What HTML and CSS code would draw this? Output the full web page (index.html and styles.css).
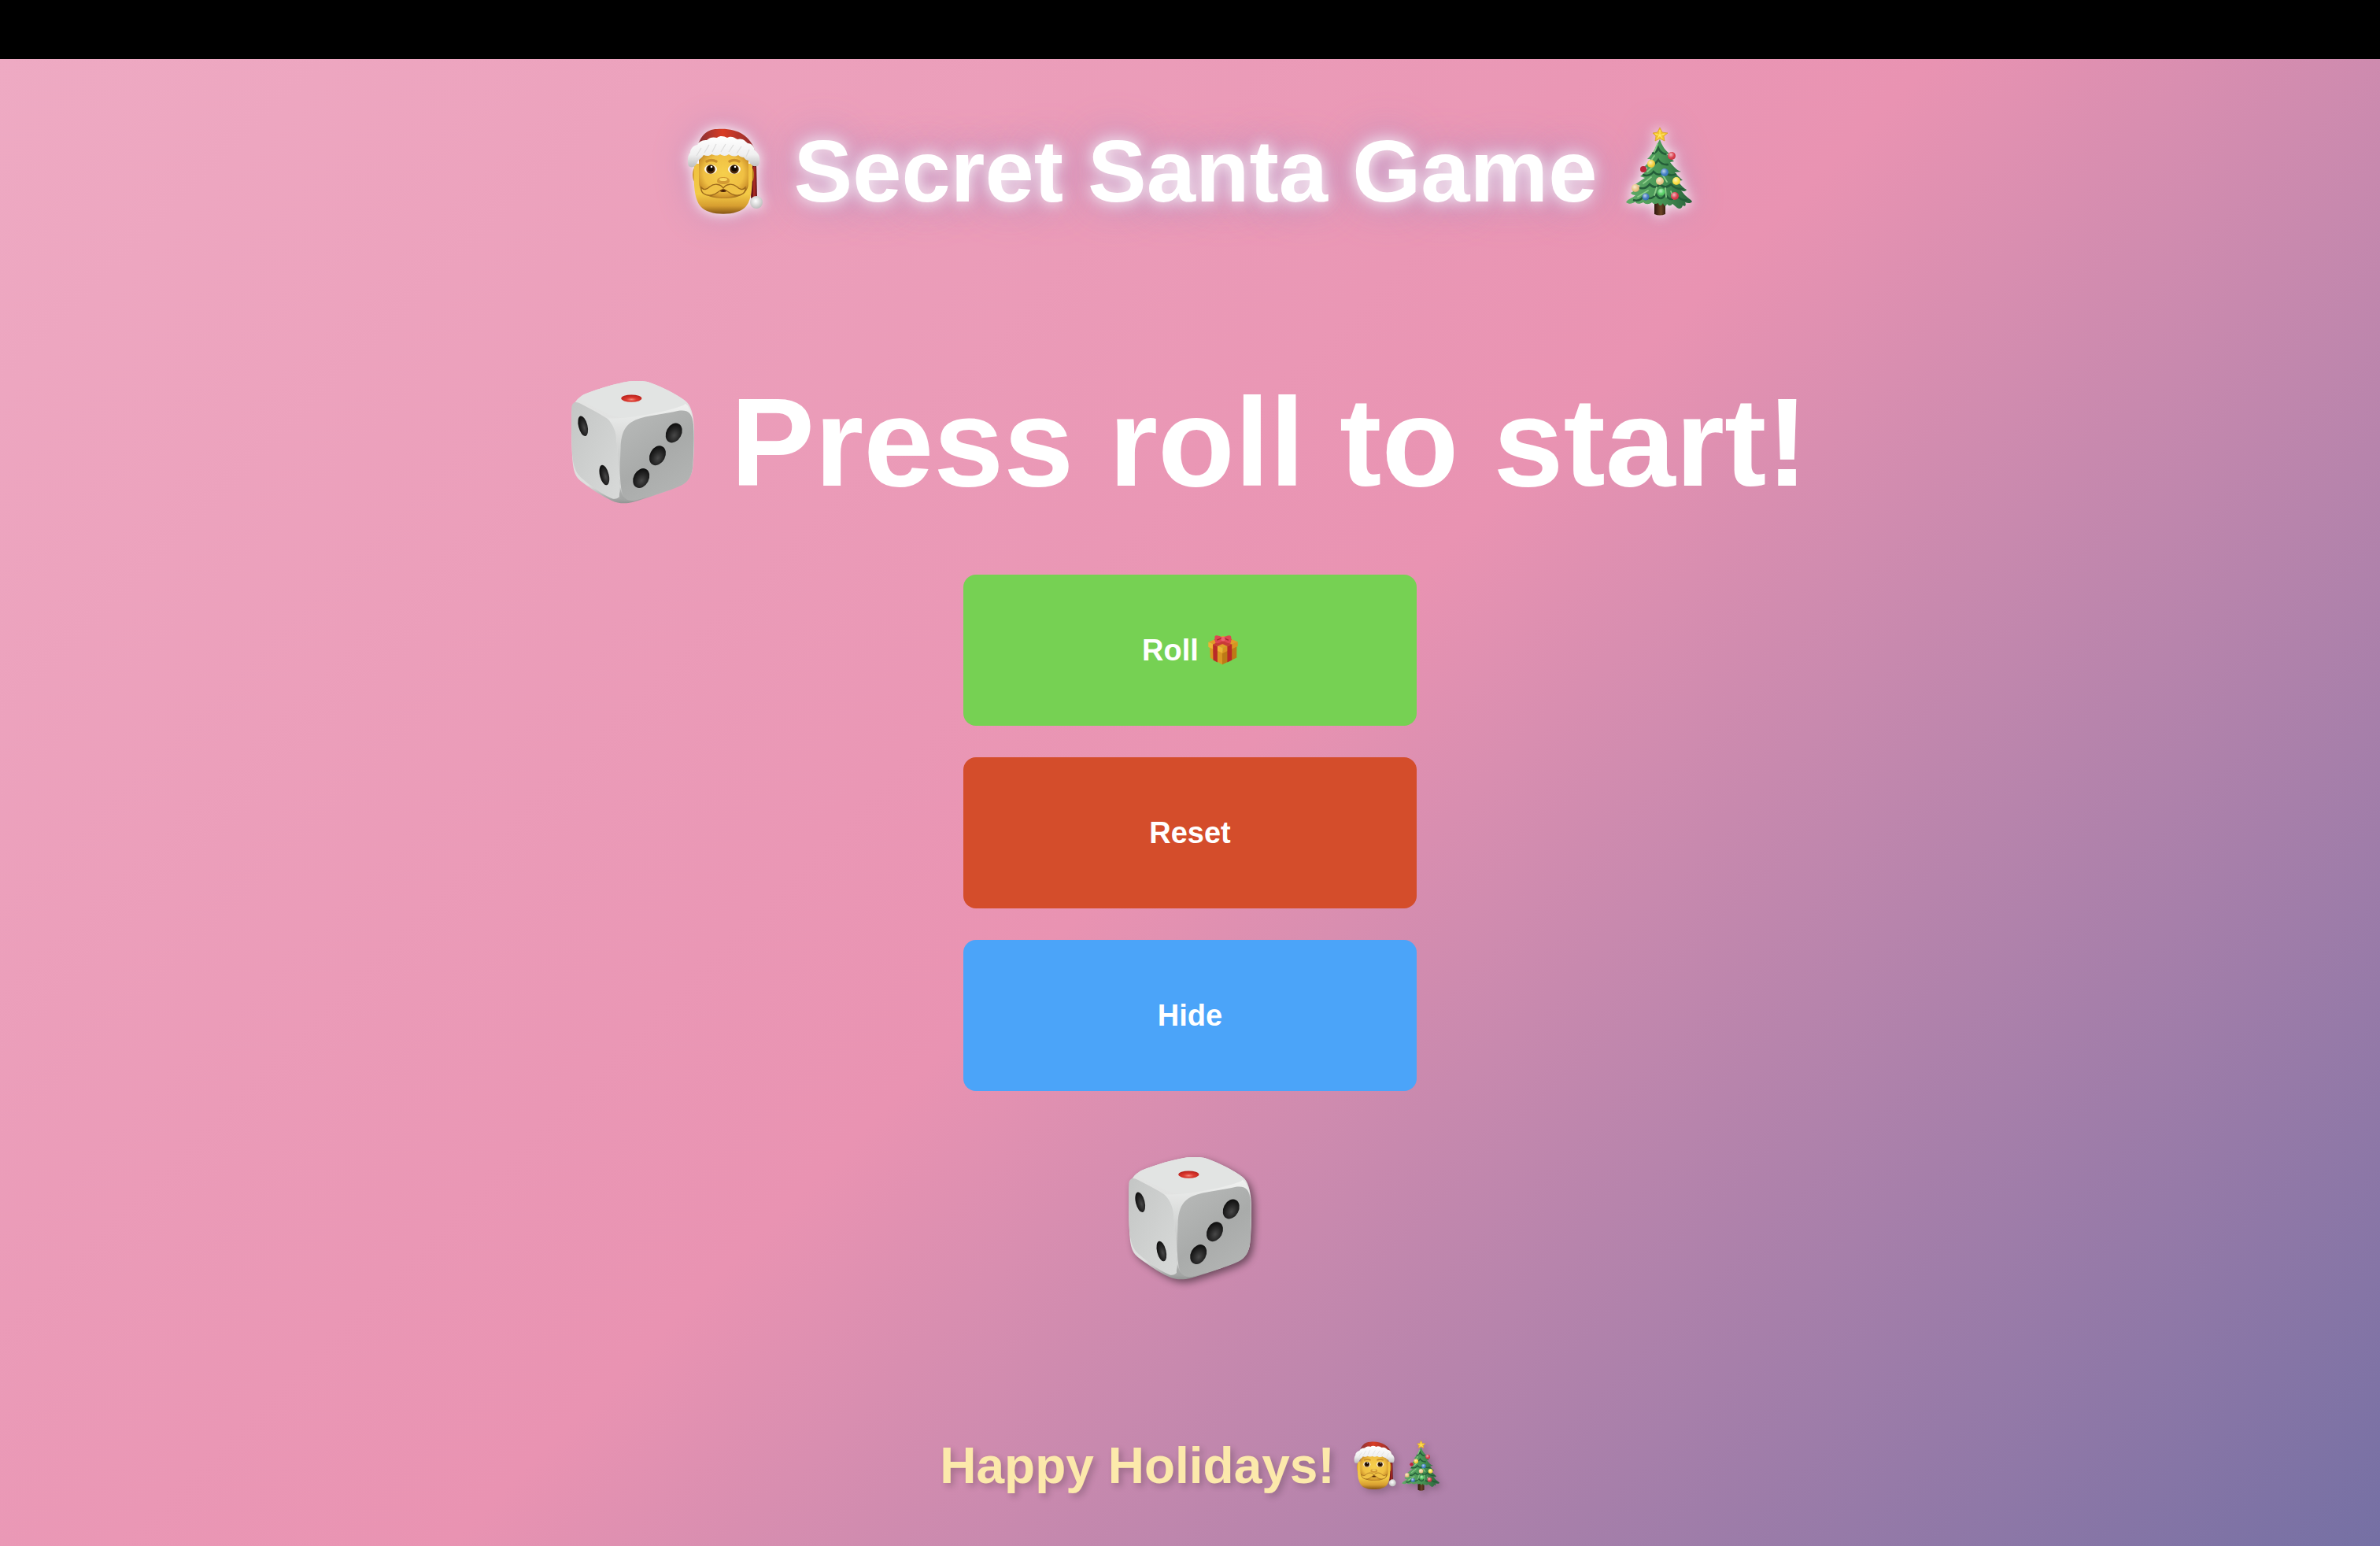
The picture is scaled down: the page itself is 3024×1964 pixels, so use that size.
FILE: index.html
```html
<!DOCTYPE html>
<html lang="en">
<head>
<meta charset="utf-8">
<meta name="viewport" content="width=device-width, initial-scale=1">
<title>Secret Santa Game</title>
<link rel="stylesheet" href="styles.css">
</head>
<body>
<svg class="sprites" aria-hidden="true">
  <defs>
    <linearGradient id="hatRed" x1="0" x2="1"><stop offset="0" stop-color="#7d3038"/><stop offset=".45" stop-color="#d93c24"/><stop offset="1" stop-color="#8c2b2e"/></linearGradient>
    <radialGradient id="skin" cx=".5" cy=".42" r=".62"><stop offset="0" stop-color="#f6cf4c"/><stop offset=".65" stop-color="#f0c043"/><stop offset=".88" stop-color="#d0962c"/><stop offset="1" stop-color="#94601a"/></radialGradient>
    <linearGradient id="beard" x1="0" y1="0" x2="0" y2="1"><stop offset="0" stop-color="#efc040"/><stop offset=".6" stop-color="#f3ca46"/><stop offset=".84" stop-color="#d79e30"/><stop offset="1" stop-color="#855414"/></linearGradient>
    <linearGradient id="fur" x1="0" y1="0" x2="0" y2="1"><stop offset="0" stop-color="#fff"/><stop offset=".6" stop-color="#f0f0f0"/><stop offset="1" stop-color="#bdbdbd"/></linearGradient>
    <radialGradient id="pom" cx=".45" cy=".4" r=".6"><stop offset="0" stop-color="#fff"/><stop offset="1" stop-color="#bcbcbc"/></radialGradient>
    <linearGradient id="leaf" x1="0" y1="0" x2="1" y2="0"><stop offset="0" stop-color="#62ab68"/><stop offset=".5" stop-color="#4a9857"/><stop offset="1" stop-color="#285f3a"/></linearGradient>
    <linearGradient id="trunk" x1="0" x2="1"><stop offset="0" stop-color="#2c160b"/><stop offset=".6" stop-color="#6d4426"/><stop offset="1" stop-color="#3a2010"/></linearGradient>
    <linearGradient id="dieBody" x1="0" y1="0" x2="0" y2="1"><stop offset="0" stop-color="#e3e4e3"/><stop offset=".85" stop-color="#dedfde"/><stop offset="1" stop-color="#929493"/></linearGradient>
    <linearGradient id="dieLeft" x1="0" y1="0" x2="1" y2="1"><stop offset="0" stop-color="#c4c6c5"/><stop offset="1" stop-color="#d8dad9"/></linearGradient>
    <linearGradient id="dieRight" x1="0" y1="0" x2=".6" y2="1"><stop offset="0" stop-color="#b9bbba"/><stop offset=".6" stop-color="#a9abaa"/><stop offset="1" stop-color="#b2b4b3"/></linearGradient>
    <linearGradient id="dieEdge" x1="0" y1="0" x2="0" y2="1"><stop offset="0" stop-color="#f0f1f0"/><stop offset=".6" stop-color="#c9cbca"/><stop offset="1" stop-color="#a0a2a1"/></linearGradient>
    <radialGradient id="pip" cx=".6" cy=".6" r=".65"><stop offset="0" stop-color="#484848"/><stop offset=".5" stop-color="#272727"/><stop offset="1" stop-color="#0b0b0b"/></radialGradient>
    <radialGradient id="pipRed" cx=".5" cy=".65" r=".6"><stop offset="0" stop-color="#f18a7c"/><stop offset=".4" stop-color="#dd3a30"/><stop offset="1" stop-color="#b9221c"/></radialGradient>
    <radialGradient id="sheen" cx=".4" cy=".35" r=".65"><stop offset="0" stop-color="#fff" stop-opacity=".65"/><stop offset=".7" stop-color="#fff" stop-opacity="0"/><stop offset="1" stop-color="#000" stop-opacity=".15"/></radialGradient>
  </defs>

  <symbol id="santa" viewBox="0 0 100 112">
    <path d="M82 46h6l1 44h-8z" fill="#6f1518"/><path d="M84 50h3l0 38h-3z" fill="#a52822"/>
    <ellipse cx="11" cy="60" rx="4" ry="10" fill="#cf972e"/><ellipse cx="82" cy="60" rx="3" ry="9" fill="#b9801f"/>
    <path d="M9 46C8 74 9 90 17 100c10 13 48 13 58 0 8-10 8-28 8-54z" fill="url(#beard)"/>
    <path d="M15 34h63v36c0 15-14 20-31 20S15 86 15 68z" fill="url(#skin)"/>
    <path d="M11 32C15 12 24 2 38 2c22-2 43 6 49 30z" fill="url(#hatRed)"/>
    <path d="M25 43q6-3 12 0M54 43q6-3 12 0" fill="none" stroke="#c98f2b" stroke-width="3.5" stroke-linecap="round"/>
    <ellipse cx="30" cy="53" rx="8" ry="6" fill="#fffbed"/><ellipse cx="60" cy="53" rx="8" ry="6" fill="#fffbed"/>
    <circle cx="30" cy="53" r="5.7" fill="#4c2808"/><circle cx="60" cy="53" r="5.7" fill="#4c2808"/>
    <circle cx="30" cy="52" r="3.8" fill="#110700"/><circle cx="60" cy="52" r="3.8" fill="#110700"/>
    <circle cx="31" cy="50" r="1.3" fill="#fff"/><circle cx="61" cy="50" r="1.3" fill="#fff"/>
    <path d="M38 68c0-4 4-5 8-5s8 1 8 5c0 3-4 4-8 4s-8-1-8-4z" fill="#d39a33"/><ellipse cx="46" cy="66" rx="5" ry="2" fill="#f9d75e"/>
    <ellipse cx="46" cy="79" rx="6" ry="3" fill="#4a2107"/>
    <path d="M46 77c-4-6-12-6-17-2-4 4-8 5-11 1-1 7 5 11 13 10 7-1 9-6 15-8 6 2 8 7 15 8 8 1 14-3 13-10-3 4-7 3-11-1-5-4-13-4-17 2z" fill="#f0c245" stroke="#9c681b" stroke-width="1.3"/>
    <path d="M2 49C0 42 1 35 4 32c0-5 4-9 9-10 2-5 8-6 12-6 4-4 9-4 13-3 4-3 9-2 13 0 5-3 9 0 13 2 6-2 10 2 13 5 5 0 8 4 9 9 5 4 7 9 6 14 0 4-2 7-5 6-4 1-7-3-9-7-3 0-5-3-6-4-3 0-6-2-7-3-5 3-9 1-12-1-4 3-8 2-11 0-4 3-8 1-11 0-3 3-7 2-10 1-2 4-6 5-8 9-2 6-7 8-11 5z" fill="url(#fur)"/>
    <path d="M12 36l6-10M22 32l6-10M32 31l5-10M43 31l6-10M53 31l6-9M63 33l6-9M75 37l4-9" stroke="#dedede" stroke-width="1.3"/>
    <circle cx="88" cy="95" r="8" fill="url(#pom)"/>
  </symbol>

  <symbol id="tree" viewBox="0 0 86 112">
    <path d="M37 92h14v18q-7 3-14 0z" fill="url(#trunk)"/>
    <path d="M44 15c3 9 7 14 12 18l-3 1 9 9-5 1c5 6 8 10 14 12l-8 1c4 5 7 7 10 10l-7 1c5 5 8 9 12 11-2 3-5 2-7 1l5 6c4 4 7 5 9 8-2 3-6 2-9 1 2 4 0 6-3 4-1 4-4 5-7 3l-6-5c-2 3-5 3-7 0-1 4-4 3-5-1-2 4-5 4-6 0-4 2-7 1-8-1-4 3-8 3-11 0-5 3-10 2-10-1C9 97 5 98 1 95c3-5 8-5 12-9-3 0-5-1-6-3 5-2 8-7 12-9l-6-2c5-3 8-6 12-8l-6-2c5-4 8-7 9-11l-4-1c4-4 7-7 8-10l-4 0c4-4 9-10 11-16z" fill="url(#leaf)"/>
    <path d="M34 33q6-1 8-7 3 7 10 8M29 47q8 2 13-6 4 7 13 6M22 60q9 3 14-4 6 7 14 1 7 6 15 2M16 76q9 4 15-4 7 7 13 0 7 7 14 0 6 7 16 6M10 92q10 3 14-7 7 10 15 0 6 10 12 0 7 11 15 2 5 6 13 5" fill="none" stroke="#245d39" stroke-width="2.5"/>
    <path d="M37 31l4-10M32 43l5-7M28 56l8-7M23 71l10-8M16 88l13-8M37 86l3-10M52 88l-1-11M62 91l-4-10M53 69l-5-8" stroke="#8bcb88" stroke-width="1.8" stroke-linecap="round"/>
    <path d="M44 0l3 6 7 1-5 4 1 6-6-3-6 3 1-6-4-4 6-1z" fill="#f5c52c" stroke="#d29b22" stroke-width=".7"/><path d="M44 3v9M38 8l6 2 6-2M41 14l3-5 3 5" stroke="#ffed77" fill="none"/>
    <g><circle cx="23" cy="53" r="4" fill="#bd263a"/><circle cx="33" cy="46" r="5" fill="#f3cf38"/><circle cx="59" cy="36" r="5" fill="#d83645"/><circle cx="50" cy="57" r="5" fill="#3b7cc3"/><circle cx="44" cy="68" r="5" fill="#ecc887"/><circle cx="65" cy="68" r="5" fill="#f8df3d"/><circle cx="13" cy="77" r="5" fill="#e7c27d"/><circle cx="26" cy="88" r="4.5" fill="#3b75bc"/><circle cx="46" cy="82" r="4.5" fill="#55cf65"/><circle cx="63" cy="87" r="5" fill="#d93748"/></g>
    <g fill="url(#sheen)"><circle cx="33" cy="46" r="5"/><circle cx="59" cy="36" r="5"/><circle cx="50" cy="57" r="5"/><circle cx="44" cy="68" r="5"/><circle cx="65" cy="68" r="5"/><circle cx="13" cy="77" r="5"/><circle cx="26" cy="88" r="4.5"/><circle cx="46" cy="82" r="4.5"/><circle cx="63" cy="87" r="5"/></g>
  </symbol>

  <symbol id="die" viewBox="0 0 466 466">
    <path d="M48 51C100 29 172 9 222 1c27-4 62-2 84 8 43 16 86 38 125 65 22 14 32 55 34 92 3 55 0 119-4 159-3 35-20 57-44 69-57 26-129 50-185 66-25 7-57 5-79-6-45-21-82-48-118-75C7 357 6 323 3 283 0 231-1 160 1 123c2-35 20-58 47-72z" fill="url(#dieBody)"/>
    <path d="M1 99C5 77 20 78 36 87c38 21 77 39 108 61 20 17 27 47 28 82l16 178c2 25-7 42-30 39C110 428 65 392 35 365 9 341 6 303 3 277 0 223-1 151 1 99z" fill="url(#dieLeft)"/>
    <path d="M172 230c-2-36-12-63-36-89 34 3 74-2 103-8 78-11 132-25 176-43 20-9 33-7 50 73-8-47-23-53-59-47-54 12-116 17-160 37-31 15-48 36-54 72l-8 150c-1 40 8 71 37 81-31-2-45-10-37-36 5-50-8-130-12-190z" fill="url(#dieEdge)"/>
    <path d="M187 252c2-55 17-88 58-105 43-17 111-21 162-34 38-5 52 11 56 53 4 49 1 106-2 156-3 39-18 62-43 74-51 24-122 42-176 57-34 6-48-11-53-45-7-45-4-105-2-156z" fill="url(#dieRight)"/>
    <path d="M48 51C100 29 172 9 222 1c27-4 62-2 84 8 43 16 86 38 116 59 17 12 13 21-4 27-60 22-144 36-201 43-27 4-51-1-73-10C110 111 78 96 51 81c-17-10-20-22-3-30z" fill="#e2e4e3"/>
    <ellipse cx="228" cy="66" rx="39" ry="14" fill="url(#pipRed)"/>
    <g fill="url(#pip)"><ellipse cx="44" cy="171" rx="17" ry="39" transform="rotate(-14 44 171)"/><ellipse cx="125" cy="357" rx="17" ry="39" transform="rotate(-14 125 357)"/><ellipse cx="389" cy="197" rx="29" ry="39" transform="rotate(28 389 197)"/><ellipse cx="327" cy="283" rx="29" ry="39" transform="rotate(28 327 283)"/><ellipse cx="265" cy="369" rx="29" ry="39" transform="rotate(28 265 369)"/></g>
  </symbol>

  <symbol id="gift" viewBox="0 0 112 112">
    <path d="M6 40l47 20v50L8 85z" fill="#d99824"/><path d="M53 60l54-22v46l-54 26z" fill="#bd7a16"/>
    <path d="M1 26l55-24 55 22-56 24z" fill="#e39b29"/><path d="M1 26l54 22v19L1 44z" fill="#eeb334"/><path d="M55 48l56-24v17L55 67z" fill="#d99421"/>
    <path d="M18 34l17 7v61l-16-9zM72 41l17-8v60l-17 9z" fill="#b92a27"/><path d="M22 17l14-6 52 22-16 8zM74 10l15 6-54 25-17-7z" fill="#c83a37"/>
    <path d="M55 10C45 2 29-2 26 3c-3 5 0 18 1 25 8 5 21-1 29-8 8 7 22 13 29 8 2-7 3-20 0-25-5-5-20 0-30 7z" fill="#df4650"/><path d="M55 9l-22 9M56 9l21 10" stroke="#a7262e" stroke-width="4"/><rect x="49" y="6" width="14" height="16" rx="5" fill="#ed6470"/>
  </symbol>
</svg>

<div class="topbar"></div>
<main class="game">
  <h1 class="title">
    <svg class="icon title-santa" role="img" aria-label="Santa"><use href="#santa"/></svg>
    <span>Secret Santa Game</span>
    <svg class="icon title-tree" role="img" aria-label="Christmas tree"><use href="#tree"/></svg>
  </h1>
  <p class="result">
    <svg class="die" role="img" aria-label="Die"><use href="#die"/></svg>
    <span>Press roll to start!</span>
  </p>
  <div class="controls">
    <button class="btn roll" type="button">Roll <svg class="gift" role="img" aria-label="Gift"><use href="#gift"/></svg></button>
    <button class="btn reset" type="button">Reset</button>
    <button class="btn hide" type="button">Hide</button>
  </div>
  <svg class="die dice-shadow" role="img" aria-label="Die"><use href="#die"/></svg>
  <footer class="footer">
    <span>Happy Holidays!</span>
    <span class="footer-icons">
      <svg class="footer-santa" role="img" aria-label="Santa"><use href="#santa"/></svg>
      <svg class="footer-tree" role="img" aria-label="Christmas tree"><use href="#tree"/></svg>
    </span>
  </footer>
</main>
</body>
</html>
```
FILE: styles.css
```css
* {
  box-sizing: border-box;
}

body {
  margin: 0;
  min-height: 100vh;
  display: flex;
  flex-direction: column;
  font-family: "Liberation Sans", Arial, Helvetica, sans-serif;
  font-weight: bold;
  color: #fff;
}

svg {
  display: block;
  flex: none;
}

.sprites {
  position: absolute;
  width: 0;
  height: 0;
}

.topbar {
  height: 75px;
  background: #000;
}

.game {
  flex: 1;
  display: flex;
  flex-direction: column;
  align-items: center;
  padding-top: 79px;
  background: linear-gradient(135deg, #eeaac3 0%, #e993b2 50%, #7570a4 100%);
}

.title {
  display: flex;
  align-items: center;
  gap: 36px;
  margin: 0;
  font-size: 112px;
  line-height: 128px;
  text-shadow: 0 0 20px #fff, 0 0 40px #b794c8, 0 0 60px #c894bc;
}

.title .icon {
  filter: drop-shadow(0 0 8px #fff) drop-shadow(0 0 20px #c894bc);
}

.title-santa {
  width: 100px;
  height: 112px;
}

.title-tree {
  width: 86px;
  height: 112px;
}

.result {
  display: flex;
  align-items: center;
  gap: 46px;
  margin: 192px 0 80px;
  font-size: 160px;
  line-height: 176px;
}

.die {
  width: 156px;
  height: 156px;
}

.controls {
  display: flex;
  flex-direction: column;
  gap: 40px;
}

.btn {
  display: flex;
  align-items: center;
  justify-content: center;
  gap: 12px;
  width: 576px;
  height: 192px;
  border: 0;
  border-radius: 16px;
  color: #fff;
  font: inherit;
  font-size: 38px;
}

.roll {
  background: #76d153;
}

.reset {
  background: #d44d2b;
}

.hide {
  background: #4ba4f9;
}

.gift {
  width: 38px;
  height: 38px;
}

.dice-shadow {
  margin-top: 84px;
  filter: drop-shadow(4px 4px 5px rgba(0, 0, 0, .45));
}

.footer {
  display: flex;
  align-items: center;
  gap: 24px;
  margin-top: 200px;
  color: #fce9ab;
  font-size: 64px;
  line-height: 72px;
  text-shadow: 4px 4px 8px rgba(0, 0, 0, .2);
}

.footer-icons {
  display: flex;
  gap: 4px;
  filter: drop-shadow(4px 4px 4px rgba(0, 0, 0, .2));
}

.footer-santa {
  width: 56px;
  height: 64px;
}

.footer-tree {
  width: 50px;
  height: 64px;
}
```
